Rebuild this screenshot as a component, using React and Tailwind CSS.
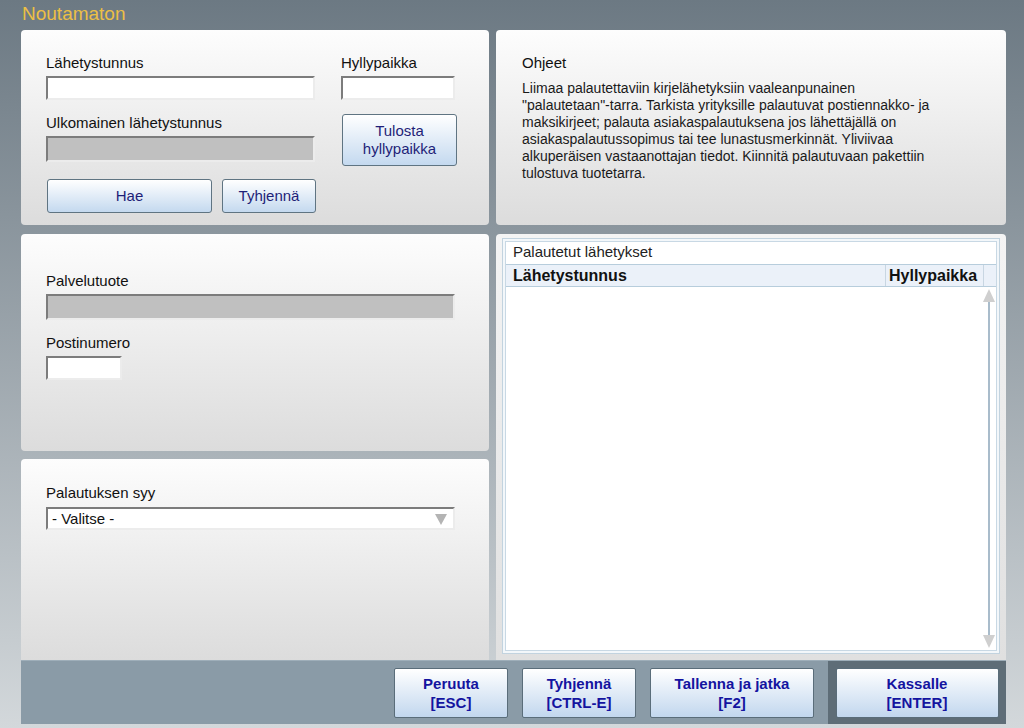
const font = { fontFamily: '"Liberation Sans", Arial, sans-serif' };

function Panel({ className = "", children }) {
  return (
    <div className={`bg-gradient-to-b from-[#fdfdfd] to-[#dcdcdc] rounded-[4px] ${className}`}>
      {children}
    </div>
  );
}

function Field({ w, h = 24, gray }) {
  return (
    <div
      className={`border-2 border-t-[#7c7c7c] border-l-[#7c7c7c] border-b-[#ececec] border-r-[#ececec] ${gray ? "bg-[#c0c0c0]" : "bg-white"}`}
      style={{ width: w, height: h }}
    />
  );
}

function Btn({ children, className = "" }) {
  return (
    <button
      type="button"
      className={`flex items-center justify-center rounded-[3px] border border-[#5f7482] bg-gradient-to-b from-white to-[#c4d9ef] text-[15px] leading-[18px] text-[#1f1f78] ${className}`}
    >
      {children}
    </button>
  );
}

function FootBtn({ children, className = "" }) {
  return (
    <button
      type="button"
      className={`flex h-[50px] flex-col items-center justify-center rounded-[2px] border border-[#5a6d7a] bg-gradient-to-b from-white to-[#c2d7ee] text-[15px] font-bold leading-[19px] text-[#1414a0] ${className}`}
    >
      {children}
    </button>
  );
}

export default function App() {
  return (
    <div
      className="relative flex h-[728px] w-[1024px] flex-col bg-gradient-to-b from-[#6c7983] to-[#d3d8db] pl-[21px] text-[15px] text-[#111]"
      style={font}
    >
      <div className="h-[30px] pl-px pt-[2px] text-[19px] leading-[24px] text-[#ecbf45]">Noutamaton</div>

      {/* top row */}
      <div className="flex gap-[7px]">
        <Panel className="h-[195px] w-[468px] pl-[25px] pt-[24px]">
          <div className="flex gap-[26px]">
            <div className="w-[269px]">
              <div className="h-[18px] leading-[18px]">Lähetystunnus</div>
              <div className="mt-[4px]">
                <Field w={269} h={24} />
              </div>
              <div className="mt-[14px] h-[18px] leading-[18px]">Ulkomainen lähetystunnus</div>
              <div className="mt-[4px]">
                <Field w={269} h={26} gray />
              </div>
            </div>
            <div className="w-[114px]">
              <div className="h-[18px] leading-[18px]">Hyllypaikka</div>
              <div className="mt-[4px]">
                <Field w={114} h={24} />
              </div>
              <Btn className="ml-px mt-[14px] h-[52px] w-[115px] flex-col">
                <span>Tulosta</span>
                <span>hyllypaikka</span>
              </Btn>
            </div>
          </div>
          <div className="mt-[13px] flex gap-[10px] pl-px">
            <Btn className="h-[34px] w-[165px]">Hae</Btn>
            <Btn className="h-[34px] w-[94px]">Tyhjennä</Btn>
          </div>
        </Panel>

        <Panel className="h-[195px] w-[510px] pl-[26px] pt-[24px]">
          <div className="h-[18px] leading-[18px]">Ohjeet</div>
          <p className="mt-[8px] w-[422px] text-[14px] leading-[17px] text-[#1a1a1a]">
            Liimaa palautettaviin kirjelähetyksiin vaaleanpunainen "palautetaan"-tarra. Tarkista yrityksille palautuvat
            postiennakko- ja maksikirjeet; palauta asiakaspalautuksena jos lähettäjällä on asiakaspalautussopimus tai tee
            lunastusmerkinnät. Yliviivaa alkuperäisen vastaanottajan tiedot. Kiinnitä palautuvaan pakettiin tulostuva
            tuotetarra.
          </p>
        </Panel>
      </div>

      {/* middle row */}
      <div className="mt-[9px] flex gap-[7px]">
        <div className="flex w-[468px] flex-col gap-[8px]">
          <Panel className="h-[217px] pl-[25px] pt-[38px]">
            <div className="h-[18px] leading-[18px]">Palvelutuote</div>
            <div className="mt-[4px]">
              <Field w={409} h={26} gray />
            </div>
            <div className="mt-[14px] h-[18px] leading-[18px]">Postinumero</div>
            <div className="mt-[4px]">
              <Field w={76} h={24} />
            </div>
          </Panel>
          <div className="h-[201px] rounded-t-[4px] bg-gradient-to-b from-[#fdfdfd] to-[#dcdcdc] pl-[25px] pt-[25px]">
            <div className="h-[18px] leading-[18px]">Palautuksen syy</div>
            <div className="mt-[5px] flex h-[23px] w-[409px] items-center justify-between border-2 border-t-[#7c7c7c] border-l-[#7c7c7c] border-b-[#ececec] border-r-[#ececec] bg-white pl-[4px] pr-[6px]">
              <span className="leading-[18px]">- Valitse -</span>
              <svg width="12" height="12" viewBox="0 0 12 12">
                <path d="M0 1 H12 L6 12 Z" fill="#b4b4b4" />
              </svg>
            </div>
          </div>
        </div>

        <div className="h-[426px] w-[510px] rounded-t-[4px] bg-gradient-to-b from-[#f4f4f4] to-[#e0e0e0] pb-[6px] pl-[6px] pr-[6px] pt-[4px]">
          <div className="h-full border border-[#c2d3df] bg-[#f3f7fa] p-[2px]">
            <div className="flex h-full flex-col border border-[#c8d8e4] bg-white">
              <div className="h-[22px] pl-[7px] leading-[20px] text-[#222]">Palautetut lähetykset</div>
              <div className="flex h-[23px] border-y border-[#b7cddc] bg-[#ebf1f9] text-[16px] font-bold leading-[21px]">
                <div className="flex-1 pl-[7px]">Lähetystunnus</div>
                <div className="w-[98px] border-l border-[#c8d6e2] pl-[3px]">Hyllypaikka</div>
                <div className="w-[13px] border-l border-[#c8d6e2]" />
              </div>
              <div className="flex flex-1 justify-end">
                <div className="flex w-[14px] flex-col items-center pb-[2px] pt-[2px]">
                  <svg width="12" height="13" viewBox="0 0 12 13">
                    <path d="M6 0 L12 13 H0 Z" fill="#cfcfcf" />
                  </svg>
                  <div className="w-[2px] flex-1 bg-[#a9bccb]" />
                  <svg width="12" height="13" viewBox="0 0 12 13">
                    <path d="M0 0 H12 L6 13 Z" fill="#cfcfcf" />
                  </svg>
                </div>
              </div>
            </div>
          </div>
        </div>
      </div>

      {/* bottom bar */}
      <div className="flex h-[64px] w-[985px] border-t border-[#9eaeb9] bg-[#8a9ba7]">
        <div className="flex flex-1 items-start justify-end gap-[14px] pr-[14px] pt-[7px]">
          <FootBtn className="w-[114px]">
            <span>Peruuta</span>
            <span>[ESC]</span>
          </FootBtn>
          <FootBtn className="w-[114px]">
            <span>Tyhjennä</span>
            <span>[CTRL-E]</span>
          </FootBtn>
          <FootBtn className="w-[164px]">
            <span>Tallenna ja jatka</span>
            <span>[F2]</span>
          </FootBtn>
        </div>
        <div className="flex w-[178px] items-start justify-center bg-[#5e6d77] pt-[7px]">
          <FootBtn className="w-[163px]">
            <span>Kassalle</span>
            <span>[ENTER]</span>
          </FootBtn>
        </div>
      </div>
    </div>
  );
}
